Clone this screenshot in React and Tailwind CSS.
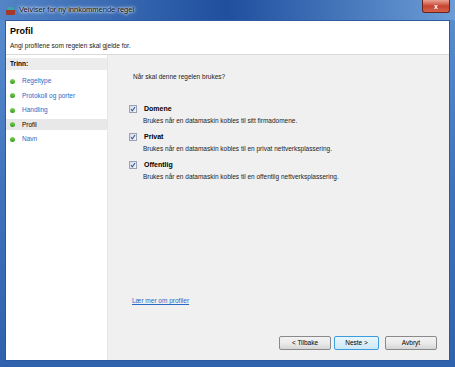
import React from "react";

const font = { fontFamily: '"Liberation Sans", Arial, sans-serif' };

function Check() {
  return (
    <div className="w-[8px] h-[8px] border border-[#9aa3b3] bg-gradient-to-br from-[#d5dce8] to-[#f4f6f9] flex items-center justify-center shrink-0">
      <svg width="6" height="6" viewBox="0 0 6 6">
        <path d="M1 3.2 L2.4 4.8 L5 1" fill="none" stroke="#3b5a9a" strokeWidth="1.1" />
      </svg>
    </div>
  );
}

function Option({ title, desc }) {
  return (
    <div className="flex flex-col">
      <div className="flex items-center gap-[7px] ml-[21px]">
        <Check />
        <span className="text-[7px] font-bold text-black leading-[9px]">{title}</span>
      </div>
      <div className="ml-[35px] mt-[4px] text-[6.5px] leading-[8px] text-[#222]">{desc}</div>
    </div>
  );
}

function Step({ label, current }) {
  return (
    <div className={`flex items-center h-[11px] mt-[3.6px] pl-[4px] ${current ? "bg-[#e8e8e8]" : ""}`}>
      <div className="w-[5px] h-[5px] rounded-full bg-gradient-to-b from-[#7fd35e] to-[#2f9a17] mr-[7px]" />
      <span className={`text-[6.5px] leading-[8px] ${current ? "text-black" : "text-[#2a6ac7]"}`}>{label}</span>
    </div>
  );
}

function Btn({ children, primary, w }) {
  return (
    <div
      className={`h-[14px] ${w} rounded-[2px] border flex items-center justify-center text-[6.5px] text-black ${
        primary
          ? "border-[#3c9ddd] bg-gradient-to-b from-[#eaf6fd] to-[#cde8f8]"
          : "border-[#8a8a8a] bg-gradient-to-b from-[#f2f2f2] via-[#ebebeb] to-[#d6d6d6]"
      }`}
    >
      {children}
    </div>
  );
}

export default function App() {
  return (
    <div style={font} className="w-[455px] h-[367px] bg-gradient-to-b from-[#5b8fd0] via-[#3f74bd] to-[#2f62ad] flex flex-col relative overflow-hidden">
      {/* title bar */}
      <div className="h-[20px] flex items-center bg-gradient-to-r from-[#5384c6] via-[#1f4f9e] to-[#6d9dd6] shrink-0">
        <div className="ml-[6px] w-[9px] h-[9px] flex flex-col items-center justify-end">
          <div className="w-[7px] h-[3px] bg-[#3aa7a4] rounded-t-[2px]" />
          <div className="w-[9px] h-[5px] bg-[#a6382a] rounded-b-[1px]" />
        </div>
        <span className="ml-[4px] text-[7.5px] text-[#0d0d0d] leading-[10px]" style={{ textShadow: "0 0 4px #dbe6f7, 0 0 3px #dbe6f7, 0 0 2px #dbe6f7" }}>
          Veiviser for ny innkommende regel
        </span>
      </div>
      <div className="absolute top-0 right-[5px] w-[28px] h-[13px] rounded-b-[3px] border border-[#6b2320] border-t-0 bg-gradient-to-b from-[#e8a494] via-[#c7442f] to-[#d4624a] flex items-center justify-center">
        <span className="text-[7px] font-bold text-white leading-none">x</span>
      </div>

      {/* client */}
      <div className="flex-1 ml-[5px] mr-[5px] mb-[6px] border border-[#2b5aa0] flex flex-col bg-white">
        <div className="h-[34px] bg-white border-b border-[#d9d9d9] flex flex-col pl-[4px] shrink-0">
          <div className="mt-[4px] text-[9px] font-bold text-black leading-[12px]">Profil</div>
          <div className="mt-[5px] text-[6.5px] text-[#222] leading-[8px]">Angi profilene som regelen skal gjelde for.</div>
        </div>
        <div className="flex-1 flex">
          <div className="w-[102px] bg-white border-r border-[#e6e6e6] flex flex-col">
            <div className="h-[12px] mt-[3px] bg-[#ececec] flex items-center pl-[4px]">
              <span className="text-[6.5px] font-bold text-black leading-[8px]">Trinn:</span>
            </div>
            <div className="mt-[2px] flex flex-col">
              <Step label="Regeltype" />
              <Step label="Protokoll og porter" />
              <Step label="Handling" />
              <Step label="Profil" current />
              <Step label="Navn" />
            </div>
          </div>
          <div className="flex-1 bg-[#f0f0f0] flex flex-col">
            <div className="ml-[25px] mt-[18px] text-[6.5px] leading-[8px] text-[#222]">Når skal denne regelen brukes?</div>
            <div className="mt-[23px] flex flex-col gap-[7px]">
              <Option title="Domene" desc="Brukes når en datamaskin kobles til sitt firmadomene." />
              <Option title="Privat" desc="Brukes når en datamaskin kobles til en privat nettverksplassering." />
              <Option title="Offentlig" desc="Brukes når en datamaskin kobles til en offentlig nettverksplassering." />
            </div>
            <div className="flex-1" />
            <div className="ml-[24px] text-[6.5px] leading-[8px] text-[#2a6ac7] underline">Lær mer om profiler</div>
            <div className="mt-[31px] mb-[10px] flex justify-end pr-[12px]">
              <Btn w="w-[52px]">&lt; Tilbake</Btn>
              <div className="w-[3px]" />
              <Btn w="w-[45px]" primary>Neste &gt;</Btn>
              <div className="w-[6px]" />
              <Btn w="w-[52px]">Avbryt</Btn>
            </div>
          </div>
        </div>
      </div>
    </div>
  );
}
